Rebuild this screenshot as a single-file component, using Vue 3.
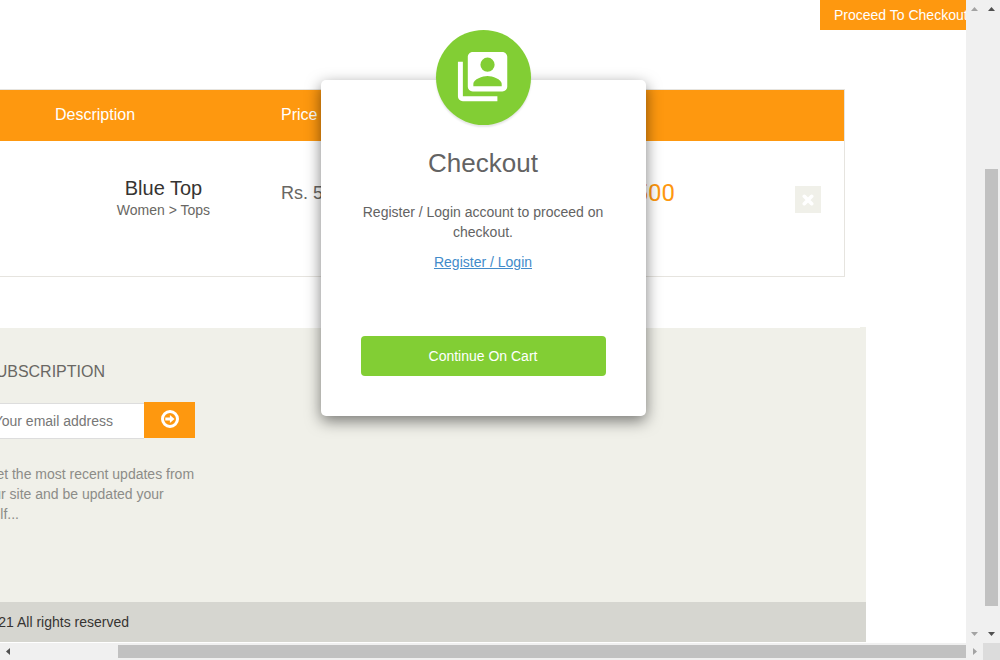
<script setup>
const up = 'M0 4h7L3.5 0z'
const down = 'M0 0h7L3.5 4z'
const updateLines = ['Get the most recent updates from', 'our site and be updated your', 'self...']
</script>

<template>
  <div class="window">
    <main class="page">
      <div class="actions"><a class="proceed">Proceed To Checkout</a></div>

      <section class="cart">
        <div class="cart-head">
          <span class="col-desc">Description</span>
          <span class="col-price">Price</span>
        </div>
        <div class="cart-row">
          <div class="product">
            <h4>Blue Top</h4>
            <p>Women &gt; Tops</p>
          </div>
          <p class="price">Rs. 500</p>
          <p class="total">Rs. 500</p>
          <button class="delete" aria-label="Remove">
            <svg width="12" height="12" viewBox="0 0 12 12"><path d="M2.3 2.3l7.4 7.4M9.7 2.3L2.3 9.7" stroke="#fff" stroke-width="3.6" stroke-linecap="round" /></svg>
          </button>
        </div>
      </section>

      <footer class="footer">
        <div class="widget">
          <h2>SUBSCRIPTION</h2>
          <form class="subscribe" @submit.prevent>
            <div class="email"><span>Your email address</span></div>
            <button class="send" aria-label="Subscribe">
              <svg width="18" height="18" viewBox="0 0 18 18">
                <circle cx="9" cy="9" r="7.5" fill="none" stroke="#fff" stroke-width="3" />
                <path d="M4.3 7.6h4.6V4.9L13.5 9l-4.6 4.1v-2.7H4.3z" fill="#fff" />
              </svg>
            </button>
          </form>
          <div class="updates"><span v-for="line in updateLines" :key="line">{{ line }}</span></div>
        </div>
        <div class="copyright"><span>Copyright © 2021 All rights reserved</span></div>
      </footer>

      <div class="modal">
        <div class="badge">
          <svg width="59.2" height="59.2" viewBox="0 0 24 24">
            <path fill="#fff" fill-rule="evenodd" d="M4 6H2v14c0 1.1.9 2 2 2h14v-2H4zM20 2H8c-1.1 0-2 .9-2 2v12c0 1.1.9 2 2 2h12c1.1 0 2-.9 2-2V4c0-1.1-.9-2-2-2zM14 4.3a2.88 2.88 0 1 1 0 5.76a2.88 2.88 0 0 1 0-5.76zM19.75 15.9H8.25v-.95c0-1.95 3.8-3.2 5.75-3.2s5.75 1.25 5.75 3.2z" />
          </svg>
        </div>
        <h4>Checkout</h4>
        <p>Register / Login account to proceed on checkout.</p>
        <p><a class="login">Register / Login</a></p>
        <button class="continue">Continue On Cart</button>
      </div>
    </main>

    <div class="vbar muted">
      <svg width="7" height="4"><path :d="up" /></svg>
      <svg width="7" height="4"><path :d="down" /></svg>
    </div>
    <div class="vbar">
      <svg width="7" height="4"><path :d="up" /></svg>
      <i class="vthumb"></i>
      <svg class="end" width="7" height="4"><path :d="down" /></svg>
    </div>
    <div class="hbar">
      <svg width="4" height="7"><path d="M4 0v7L0 3.5z" /></svg>
      <i class="hthumb"></i>
      <svg class="right" width="4" height="7"><path d="M0 0v7l4-3.5z" /></svg>
    </div>
    <div class="corner"></div>
  </div>
</template>

<style>
body { margin: 0; overflow: hidden; }
</style>

<style scoped>
* { box-sizing: border-box; }
h2, h4, p { margin: 0; font-weight: 400; }
button { border: 0; padding: 0; font: inherit; }
svg { display: block; flex: none; }
.window {
  width: 1000px; height: 660px; overflow: hidden;
  display: grid; grid-template-columns: 966px 17px 17px; grid-template-rows: 643px 17px;
  font: 14px/20px "Liberation Sans", Arial, sans-serif; color: #696763; background: #fff;
}
.page { position: relative; overflow: hidden; white-space: nowrap; }
.actions { display: flex; justify-content: flex-end; height: 30px; }
.proceed { width: 146px; padding: 5px 0 0 14px; background: #fe980f; color: #fff; overflow: hidden; font-size: 14px; }

.cart { width: 845px; height: 188px; margin-top: 59px; border: 1px solid #e6e4df; border-left: 0; }
.cart-head { display: flex; height: 51px; padding-left: 55px; background: #fe980f; color: #fff; font-size: 16px; line-height: 49px; }
.col-desc { width: 226px; }
.cart-row { display: flex; align-items: flex-start; }
.product { width: 163px; margin-left: 82px; padding-top: 36px; text-align: center; }
.product h4 { color: #363432; font-size: 20px; line-height: 22px; }
.product p { line-height: 22px; }
.price { width: 160px; margin-left: 36px; padding-top: 42px; font-size: 18px; }
.total { width: 100px; margin-left: 134px; padding-top: 41px; color: #fe980f; font: 24px/22px Roboto, sans-serif; text-align: right; }
.delete { display: grid; place-items: center; width: 26px; height: 27px; margin: 45px 23px 0 auto; background: #f0f0e9; }

.footer { width: 866px; height: 314px; margin-top: 51px; display: flex; flex-direction: column; background: #f0f0e9; }
.footer::before { content: ""; align-self: flex-end; width: 6px; height: 1px; margin-top: -1px; background: #f0f0e9; }
.widget { flex: 1; padding-top: 35px; }
.widget h2 { width: 105px; display: flex; justify-content: flex-end; font-size: 16px; line-height: 18px; }
.subscribe { display: flex; align-items: flex-start; margin-top: 21px; }
.email { width: 144px; height: 36px; margin-top: 1px; padding: 8px 31px 0 0; display: flex; justify-content: flex-end; background: #fff; border: 1px solid #ddd; border-width: 1px 0; color: #777; line-height: 19px; }
.send { display: flex; align-items: flex-start; width: 51px; height: 36px; padding: 8px 0 0 17px; background: #fe980f; }
.updates { display: flex; flex-direction: column; margin: 25px 0 0 -14.5px; color: #8c8c88; }
.copyright { height: 40px; display: flex; padding-right: 737px; justify-content: flex-end; background: #d6d6d0; color: #363432; line-height: 40px; }

.modal { position: absolute; left: 321px; top: 80px; width: 325px; height: 336px; padding: 69px 40px 0; background: #fff; border-radius: 5px; box-shadow: 0 5px 15px rgba(0, 0, 0, .5); text-align: center; white-space: normal; }
.badge { position: absolute; left: 115px; top: -50px; width: 95px; height: 95px; padding: 17.4px 0 0 17.4px; border-radius: 50%; background: #82ce34; box-shadow: 0 2px 2px rgba(0, 0, 0, .1); }
.modal h4 { font-size: 26px; line-height: 28px; margin: 0 1px 25px 0; color: #636363; }
.modal p { margin: 0 1px 10px 0; color: #636363; }
.login { color: #428bca; text-decoration: underline; }
.continue { display: block; width: 245px; height: 40px; padding-right: 1px; margin-top: 64px; border-radius: 4px; background: #82ce34; color: #fff; }

.vbar { display: flex; flex-direction: column; align-items: center; padding: 7px 0; background: #f0f0f0; fill: #505050; }
.muted { justify-content: space-between; fill: #a3a3a3; }
.vthumb { width: 13px; height: 437px; margin-top: 158px; background: #c1c1c1; }
.end { margin-top: auto; }
.hbar { grid-column: 1 / 3; display: flex; align-items: center; padding: 0 6px; background: #f0f0f0; fill: #505050; }
.hthumb { width: 848px; height: 13px; margin-left: 108px; background: #c1c1c1; }
.right { margin-left: 7px; fill: #a3a3a3; }
.corner { background: #dcdcdc; }
</style>
